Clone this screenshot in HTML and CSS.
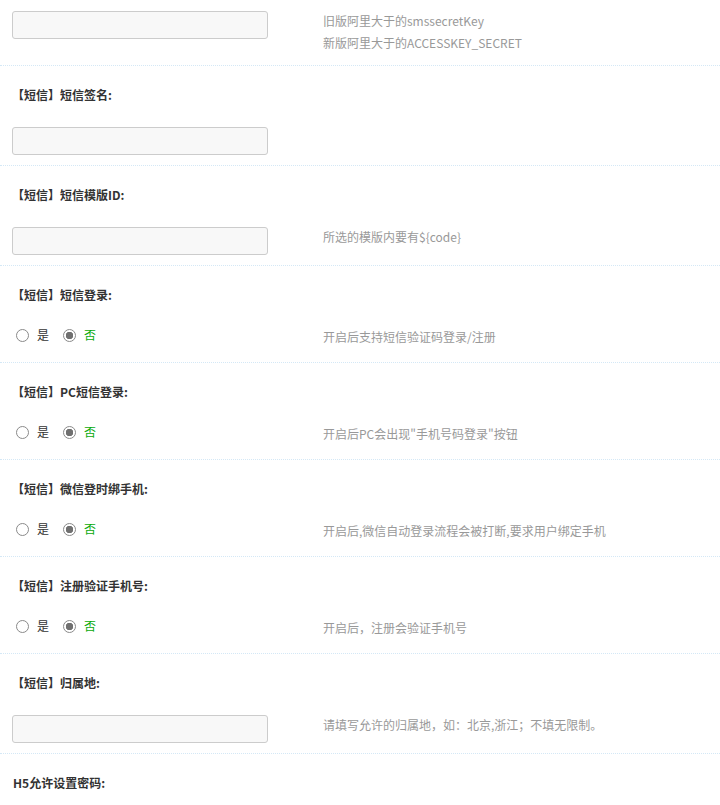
FILE: index.html
```html
<!DOCTYPE html>
<html lang="zh-CN">
<head>
<meta charset="utf-8">
<title>短信设置</title>
<link rel="stylesheet" href="styles.css">
</head>
<body>
<div class="form">
  <div class="row row-first">
    <div class="ctrl">
      <div class="field"><input class="text" type="text"></div>
      <div class="help">旧版阿里大于的smssecretKey<br>新版阿里大于的ACCESSKEY_SECRET</div>
    </div>
  </div>

  <div class="row">
    <div class="label">【短信】短信签名:</div>
    <div class="ctrl">
      <div class="field"><input class="text" type="text"></div>
      <div class="help"></div>
    </div>
  </div>

  <div class="row">
    <div class="label">【短信】短信模版ID:</div>
    <div class="ctrl">
      <div class="field"><input class="text" type="text"></div>
      <div class="help">所选的模版内要有${code}</div>
    </div>
  </div>

  <div class="row row-radio">
    <div class="label">【短信】短信登录:</div>
    <div class="ctrl">
      <div class="field radios">
        <label class="opt"><input class="radio" type="radio" name="r1"><span>是</span></label>
        <label class="opt opt-no"><input class="radio" type="radio" name="r1" checked><span>否</span></label>
      </div>
      <div class="help">开启后支持短信验证码登录/注册</div>
    </div>
  </div>

  <div class="row row-radio">
    <div class="label">【短信】PC短信登录:</div>
    <div class="ctrl">
      <div class="field radios">
        <label class="opt"><input class="radio" type="radio" name="r2"><span>是</span></label>
        <label class="opt opt-no"><input class="radio" type="radio" name="r2" checked><span>否</span></label>
      </div>
      <div class="help">开启后PC会出现"手机号码登录"按钮</div>
    </div>
  </div>

  <div class="row row-radio">
    <div class="label">【短信】微信登时绑手机:</div>
    <div class="ctrl">
      <div class="field radios">
        <label class="opt"><input class="radio" type="radio" name="r3"><span>是</span></label>
        <label class="opt opt-no"><input class="radio" type="radio" name="r3" checked><span>否</span></label>
      </div>
      <div class="help">开启后,微信自动登录流程会被打断,要求用户绑定手机</div>
    </div>
  </div>

  <div class="row row-radio">
    <div class="label">【短信】注册验证手机号:</div>
    <div class="ctrl">
      <div class="field radios">
        <label class="opt"><input class="radio" type="radio" name="r4"><span>是</span></label>
        <label class="opt opt-no"><input class="radio" type="radio" name="r4" checked><span>否</span></label>
      </div>
      <div class="help">开启后，注册会验证手机号</div>
    </div>
  </div>

  <div class="row">
    <div class="label">【短信】归属地:</div>
    <div class="ctrl">
      <div class="field"><input class="text" type="text"></div>
      <div class="help">请填写允许的归属地，如：北京,浙江；不填无限制。</div>
    </div>
  </div>

  <div class="row row-last">
    <div class="label label-plain">H5允许设置密码:</div>
  </div>
</div>
</body>
</html>
```

FILE: styles.css
```css
html, body {
  margin: 0;
  padding: 0;
  background: #ffffff;
}

body {
  font-family: "Noto Sans CJK SC", "Noto Sans", "Liberation Sans", sans-serif;
  font-size: 12px;
  color: #333333;
}

.form {
  width: 720px;
}

.row {
  padding: 21px 0 10px 0;
  border-bottom: 1px dotted #d4e8f6;
}

.row-first {
  padding-top: 11px;
  padding-bottom: 11px;
}

.row-radio {
  padding-bottom: 10px;
}

.row-last {
  border-bottom: none;
  padding-bottom: 30px;
}

.label {
  height: 16px;
  line-height: 16px;
  font-weight: bold;
  color: #333333;
  padding-left: 12px;
  margin-bottom: 24px;
  white-space: nowrap;
}

.label-plain {
  padding-left: 13px;
}

.ctrl {
  display: grid;
  grid-template-columns: 311px 1fr;
  align-items: start;
  padding-left: 12px;
}

.field {
  min-height: 28px;
}

.text {
  display: block;
  box-sizing: border-box;
  width: 256px;
  height: 28px;
  margin: 0;
  padding: 0 8px;
  border: 1px solid #cccccc;
  border-radius: 3px;
  background: #f8f8f8;
  font: inherit;
  outline: none;
}

.help {
  margin-top: -1px;
  line-height: 22px;
  color: #999999;
  white-space: nowrap;
}

.radios {
  display: flex;
  align-items: flex-start;
  min-height: 25px;
  height: 25px;
  padding-left: 4px;
}

.opt {
  display: flex;
  align-items: center;
  height: 14px;
  margin-top: 1px;
  margin-right: 14px;
  line-height: 14px;
  color: #333333;
}

.opt span {
  margin-left: 8px;
}

.opt-no span {
  color: #0aaa0a;
}

.radio {
  -webkit-appearance: none;
  appearance: none;
  box-sizing: border-box;
  width: 13px;
  height: 13px;
  margin: 0;
  border: 1px solid #8a8a8a;
  border-radius: 50%;
  background: #ffffff;
}

.radio:checked {
  background: radial-gradient(circle, #707070 0, #707070 3.5px, #ffffff 4px);
  border-color: #8a8a8a;
}
```
